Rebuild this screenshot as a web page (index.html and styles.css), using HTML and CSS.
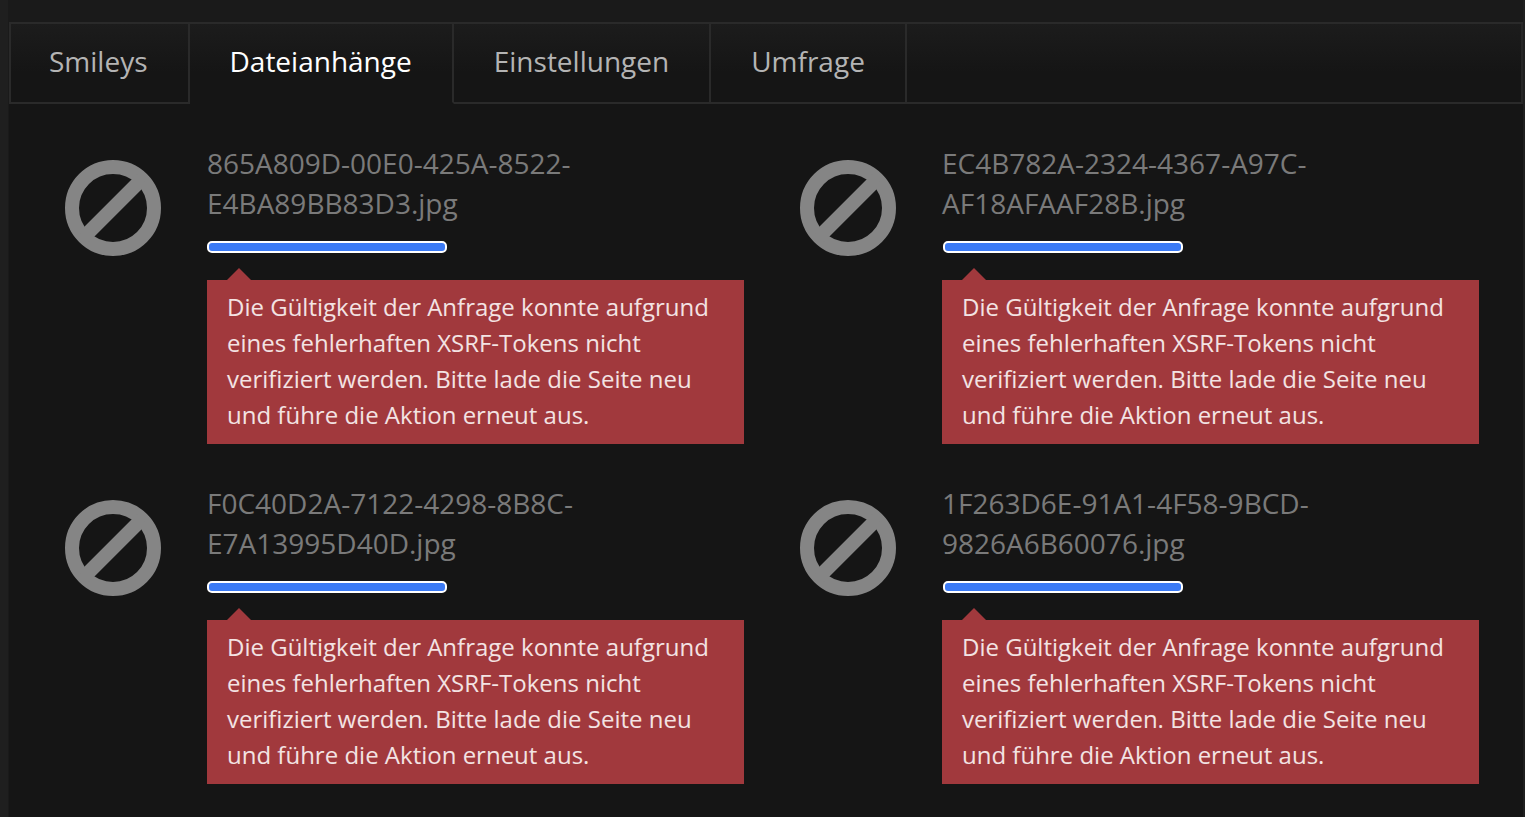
FILE: index.html
```html
<!DOCTYPE html>
<html lang="de">
<head>
<meta charset="utf-8">
<title>Dateianhänge</title>
<link rel="stylesheet" href="styles.css">
</head>
<body>
<svg class="defs" width="0" height="0" aria-hidden="true"><defs>
<symbol id="ban" viewBox="0 0 96 96"><circle cx="48" cy="48" r="41" fill="none" stroke="#858585" stroke-width="14"/><path d="M19 77 77 19" fill="none" stroke="#858585" stroke-width="14"/></symbol>
</defs></svg>
<main class="panel">
  <nav class="tabs">
    <a class="tab">Smileys</a>
    <a class="tab tab-active">Dateianhänge</a>
    <a class="tab">Einstellungen</a>
    <a class="tab">Umfrage</a>
    <span class="tab-rest"></span>
  </nav>
  <ul class="files">
    <li class="file">
      <svg class="file-icon"><use href="#ban"/></svg>
      <div class="file-body">
        <p class="file-name">865A809D-00E0-425A-8522-E4BA89BB83D3.jpg</p>
        <div class="progress"></div>
        <p class="error">Die Gültigkeit der Anfrage konnte aufgrund eines fehlerhaften XSRF-Tokens nicht verifiziert werden. Bitte lade die Seite neu und führe die Aktion erneut aus.</p>
      </div>
    </li>
    <li class="file">
      <svg class="file-icon"><use href="#ban"/></svg>
      <div class="file-body">
        <p class="file-name">EC4B782A-2324-4367-A97C-AF18AFAAF28B.jpg</p>
        <div class="progress"></div>
        <p class="error">Die Gültigkeit der Anfrage konnte aufgrund eines fehlerhaften XSRF-Tokens nicht verifiziert werden. Bitte lade die Seite neu und führe die Aktion erneut aus.</p>
      </div>
    </li>
    <li class="file">
      <svg class="file-icon"><use href="#ban"/></svg>
      <div class="file-body">
        <p class="file-name">F0C40D2A-7122-4298-8B8C-E7A13995D40D.jpg</p>
        <div class="progress"></div>
        <p class="error">Die Gültigkeit der Anfrage konnte aufgrund eines fehlerhaften XSRF-Tokens nicht verifiziert werden. Bitte lade die Seite neu und führe die Aktion erneut aus.</p>
      </div>
    </li>
    <li class="file">
      <svg class="file-icon"><use href="#ban"/></svg>
      <div class="file-body">
        <p class="file-name">1F263D6E-91A1-4F58-9BCD-9826A6B60076.jpg</p>
        <div class="progress"></div>
        <p class="error">Die Gültigkeit der Anfrage konnte aufgrund eines fehlerhaften XSRF-Tokens nicht verifiziert werden. Bitte lade die Seite neu und führe die Aktion erneut aus.</p>
      </div>
    </li>
  </ul>
</main>
</body>
</html>
```
FILE: styles.css
```css
* { box-sizing: border-box; }
html, body { margin: 0; height: 100%; overflow: hidden; }
body {
  background: #1a1a1a;
  font-family: "Open Sans", "Noto Sans", sans-serif;
  padding: 22px 0 0 1px;
  border-left: 8px solid #1f1f1f;
  border-right: 2px solid #1f1f1f;
}
.defs { position: absolute; }
.panel {
  height: 795px;
  background: #151515;
}
.tabs {
  display: flex;
  height: 82px;
  border-top: 2px solid #2a2a2a;
  background: linear-gradient(#1c1c1c, #151515 60%);
}
.tab {
  height: 80px;
  padding: 0 40px;
  font-size: 28px;
  line-height: 74px;
  color: #b4b4b4;
  border-right: 2px solid #2a2a2a;
  border-bottom: 2px solid #2a2a2a;
}
.tab:first-child { border-left: 2px solid #2a2a2a; padding: 0 40px 0 38px; }
.tab-active { color: #fff; border-bottom-color: transparent; }
.tab-rest {
  flex: 1;
  height: 80px;
  border-bottom: 2px solid #2a2a2a;
  border-right: 2px solid #262626;
}
.files {
  list-style: none;
  margin: 0;
  padding: 39px 0 0 56px;
  display: grid;
  grid-template-columns: 735px 735px;
  grid-auto-rows: 340px;
}
.file { display: flex; gap: 46px; }
.file-icon { width: 96px; height: 96px; margin-top: 17px; flex: none; }
.file-body { width: 537px; }
.file-name {
  margin: 0;
  width: 400px;
  font-size: 28px;
  line-height: 40px;
  color: #7a7a7a;
}
.progress {
  width: 240px;
  height: 12px;
  margin-top: 18px;
  background: #3b7af5;
  border: 2px solid #fff;
  border-radius: 5px;
}
.file:nth-child(even) .progress { margin-left: 1px; }
.error {
  position: relative;
  margin: 27px 0 0;
  padding: 9px 20px 11px;
  font-size: 24px;
  line-height: 36px;
  color: #f3e3e3;
  background: #a1393d;
}
.error::before {
  content: "";
  position: absolute;
  left: 20px;
  top: -12px;
  width: 24px;
  height: 12px;
  background: #a1393d;
  clip-path: polygon(0 100%, 50% 0, 100% 100%);
}
```
